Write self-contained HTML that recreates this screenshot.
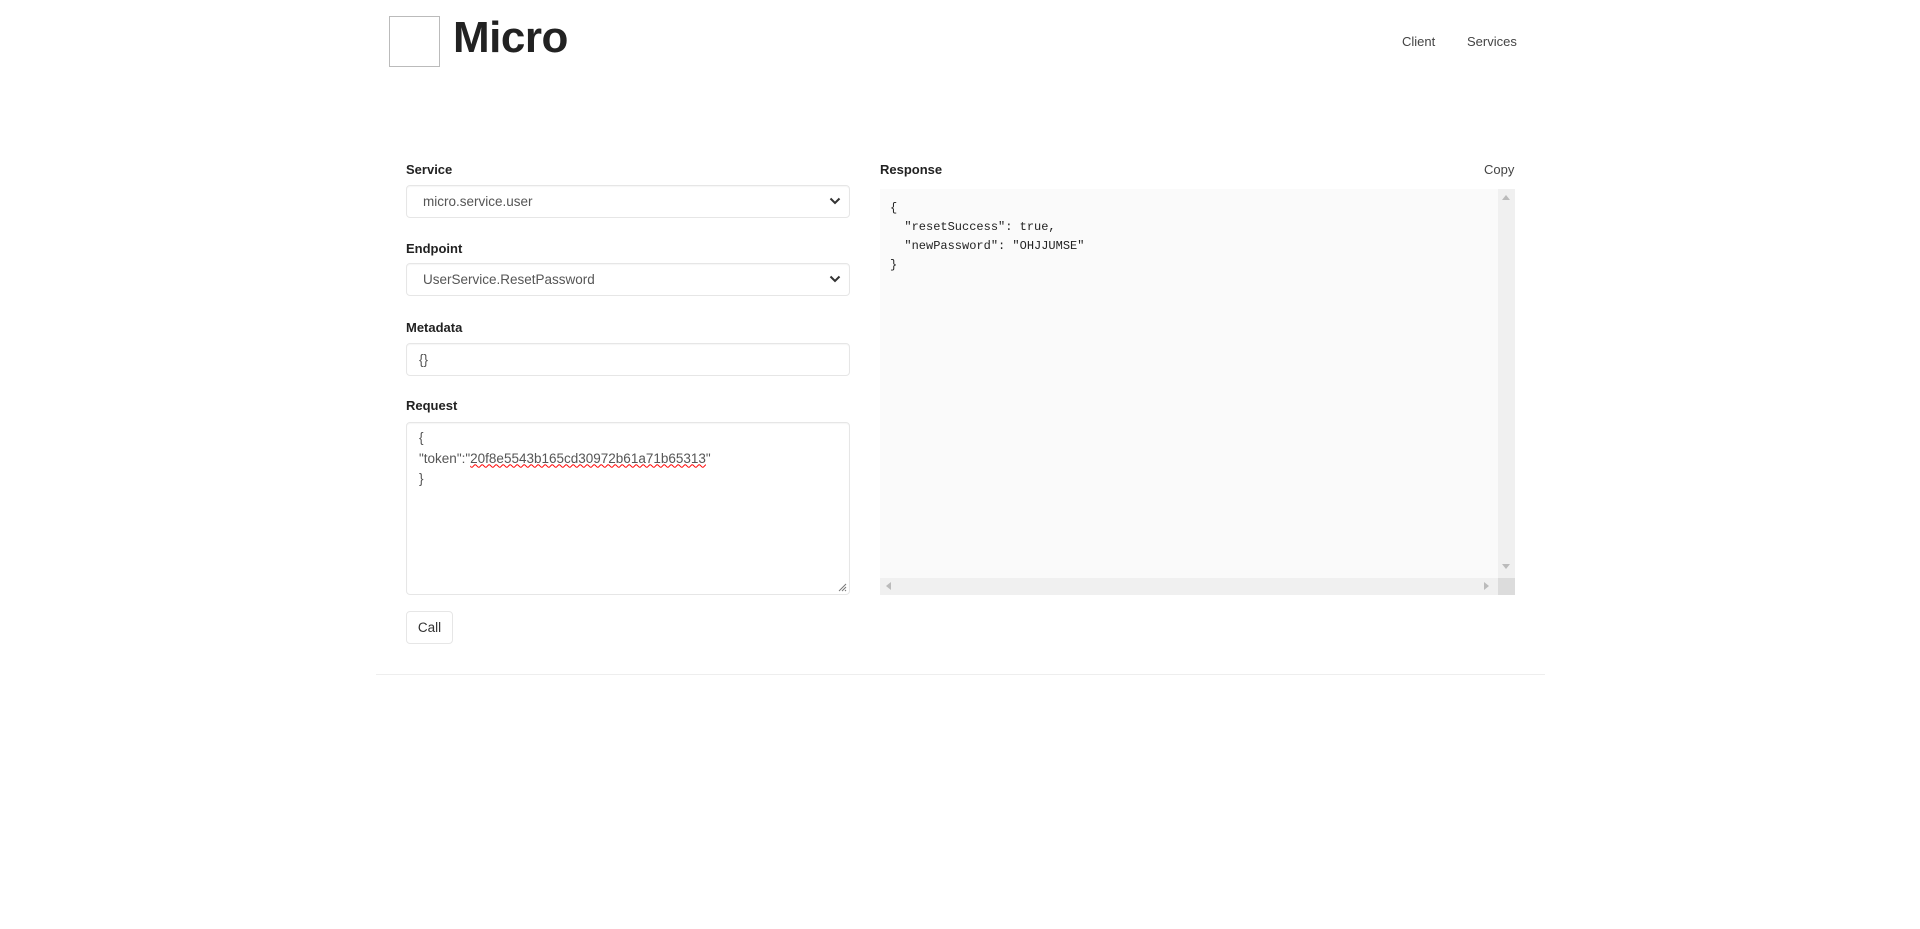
<!DOCTYPE html>
<html><head><meta charset="utf-8"><style>
*{box-sizing:border-box;margin:0;padding:0}
body{width:1920px;height:929px;background:#fff;font-family:"Liberation Sans",sans-serif;color:#333;position:relative;overflow:hidden}
.a{position:absolute}
.logo{left:389px;top:16px;width:51px;height:51px;border:1px solid #bbb}
.title{left:453px;top:13px;font-size:44px;font-weight:bold;color:#222;letter-spacing:-0.5px}
.nav{top:34px;font-size:13px;color:#444}
.lbl{font-size:13px;font-weight:bold;color:#222}
.inp{left:406px;width:444px;height:33px;border:1px solid #e6e6e6;border-radius:4px;box-shadow:inset 0 1px 1px rgba(0,0,0,.04);font-size:13.5px;color:#555;padding:8px 16px}
.chev{position:absolute;right:8px;top:11px;width:12px;height:8px}
.code{font-family:"Liberation Mono",monospace;font-size:12px;color:#222;line-height:19px}
</style></head><body>
<div class="a logo"></div>
<div class="a title">Micro</div>
<div class="a nav" style="left:1402px">Client</div>
<div class="a nav" style="left:1467px">Services</div>

<div class="a lbl" style="left:406px;top:162px">Service</div>
<div class="a inp" style="top:185px">micro.service.user<svg class="chev" viewBox="0 0 12 8"><path d="M1.5 1.5L6 6l4.5-4.5" fill="none" stroke="#333" stroke-width="2"/></svg></div>
<div class="a lbl" style="left:406px;top:241px">Endpoint</div>
<div class="a inp" style="top:263px">UserService.ResetPassword<svg class="chev" viewBox="0 0 12 8"><path d="M1.5 1.5L6 6l4.5-4.5" fill="none" stroke="#333" stroke-width="2"/></svg></div>
<div class="a lbl" style="left:406px;top:320px">Metadata</div>
<div class="a inp" style="top:343px;padding-left:12px">{}</div>
<div class="a lbl" style="left:406px;top:398px">Request</div>
<div class="a inp" style="top:422px;height:173px;padding:5px 12px;line-height:20.5px">{<br>"token":"<span style="text-decoration:underline wavy red;text-decoration-thickness:1px">20f8e5543b165cd30972b61a71b65313</span>"<br>}
<svg style="position:absolute;right:2px;bottom:2px" width="9" height="9"><path d="M1 8L8 1M4 8L8 4M7 8L8 7" stroke="#777" stroke-width="1"/></svg></div>
<div class="a" style="left:406px;top:611px;width:47px;height:33px;border:1px solid #e6e6e6;border-radius:4px;font-size:13.5px;color:#333;padding:8px 0;text-align:center">Call</div>
<div class="a" style="left:376px;top:674px;width:1169px;height:1px;background:#eee"></div>

<div class="a lbl" style="left:880px;top:162px">Response</div>
<div class="a" style="left:1484px;top:162px;font-size:13px;color:#444">Copy</div>
<div class="a" style="left:880px;top:189px;width:635px;height:406px;background:#fafafa">
<div class="a code" style="left:10px;top:10px">{<br>&nbsp;&nbsp;"resetSuccess": true,<br>&nbsp;&nbsp;"newPassword": "OHJJUMSE"<br>}</div>
<div class="a" style="right:0;top:0;width:17px;height:389px;background:#f0f0f0"></div>
<div class="a" style="left:0;bottom:0;width:618px;height:17px;background:#f0f0f0"></div>
<div class="a" style="right:0;bottom:0;width:17px;height:17px;background:#dcdcdc"></div>
<div class="a" style="right:5px;top:6px;width:0;height:0;border-left:4px solid transparent;border-right:4px solid transparent;border-bottom:5px solid #bbb"></div>
<div class="a" style="right:5px;top:375px;width:0;height:0;border-left:4px solid transparent;border-right:4px solid transparent;border-top:5px solid #bbb"></div>
<div class="a" style="left:6px;bottom:5px;width:0;height:0;border-top:4px solid transparent;border-bottom:4px solid transparent;border-right:5px solid #bbb"></div>
<div class="a" style="left:604px;bottom:5px;width:0;height:0;border-top:4px solid transparent;border-bottom:4px solid transparent;border-left:5px solid #bbb"></div>
</div>
</body></html>
